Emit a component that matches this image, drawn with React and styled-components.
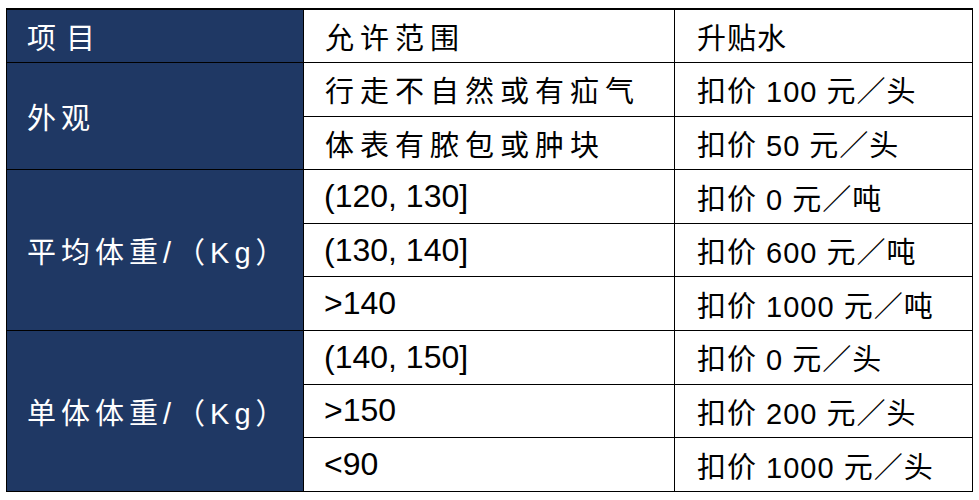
import React from "react"
import styled, { createGlobalStyle } from "styled-components"

const Global = createGlobalStyle`
  html, body {
    margin: 0;
    padding: 0;
    background: #ffffff;
  }
  body {
    padding: 8px 6px;
    font-family: "Liberation Sans", "Noto Sans CJK SC", sans-serif;
  }
`

const Table = styled.table`
  width: 966px;
  table-layout: fixed;
  border-collapse: collapse;
  border-top: 2px solid #000;
  font-size: 29px;
  color: #000;
`

const Row = styled.tr`
  height: 53.6px;
`

const Label = styled.td`
  width: 297px;
  box-sizing: border-box;
  background: #1f3864;
  color: #ffffff;
  border: 1px solid #000;
  padding: 0 0 0 20px;
  letter-spacing: ${({ $spacing = 5 }) => $spacing}px;
  vertical-align: middle;
  white-space: nowrap;
`

const Cell = styled.td`
  box-sizing: border-box;
  border: 1px solid #000;
  padding: 0 0 0 ${({ $pad }) => $pad}px;
  font-size: ${({ $size = 29 }) => $size}px;
  letter-spacing: ${({ $spacing }) => $spacing}px;
  vertical-align: middle;
  white-space: nowrap;
  width: ${({ $w }) => $w}px;
`

const groups = [
  {
    label: "外观",
    rows: [
      ["行走不自然或有疝气", "扣价 100 元／头"],
      ["体表有脓包或肿块", "扣价 50 元／头"],
    ],
  },
  {
    label: "平均体重/（Kg）",
    rows: [
      ["(120, 130]", "扣价 0 元／吨"],
      ["(130, 140]", "扣价 600 元／吨"],
      [">140", "扣价 1000 元／吨"],
    ],
  },
  {
    label: "单体体重/（Kg）",
    rows: [
      ["(140, 150]", "扣价 0 元／头"],
      [">150", "扣价 200 元／头"],
      ["<90", "扣价 1000 元／头"],
    ],
  },
]

const isLatin = (text) => /^[\x00-\x7f]+$/.test(text)

const Range = ({ children }) =>
  isLatin(children) ? (
    <Cell $w={371} $pad={20} $size={32} $spacing={0}>
      {children}
    </Cell>
  ) : (
    <Cell $w={371} $pad={21} $spacing={6}>
      {children}
    </Cell>
  )

const Price = ({ children }) => (
  <Cell $w={298} $pad={22} $spacing={1}>
    {children}
  </Cell>
)

export default function App() {
  return (
    <>
      <Global />
      <Table>
        <tbody>
          <Row>
            <Label $spacing={10}>项目</Label>
            <Range>允许范围</Range>
            <Price>升贴水</Price>
          </Row>
          {groups.map((g) =>
            g.rows.map(([range, price], i) => (
              <Row key={g.label + i}>
                {i === 0 && <Label rowSpan={g.rows.length}>{g.label}</Label>}
                <Range>{range}</Range>
                <Price>{price}</Price>
              </Row>
            ))
          )}
        </tbody>
      </Table>
    </>
  )
}
